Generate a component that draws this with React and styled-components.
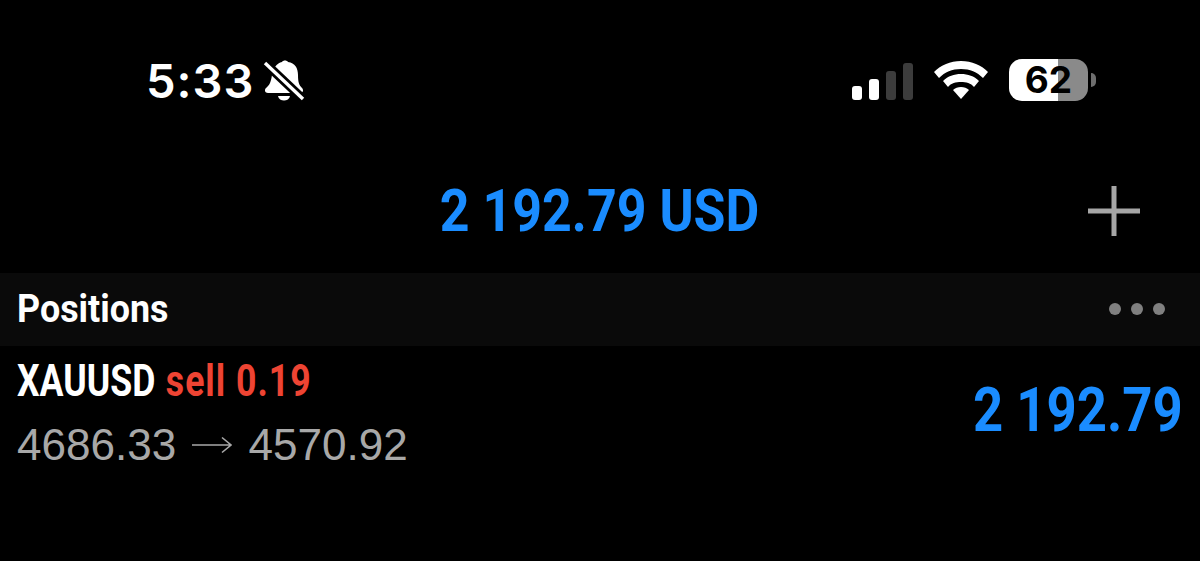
import React from 'react';
import styled, { createGlobalStyle } from 'styled-components';

const Global = createGlobalStyle`
    html, body {
        margin: 0;
        padding: 0;
        background-color: #000;
    }
`;

// no DIN style font here, so Roboto gets squeezed to the same shape
const Condensed = styled.div`
    font-family: "Roboto", "Liberation Sans", sans-serif;
    font-size: ${(props) => props.size}px;
    font-weight: 700;
    white-space: nowrap;
    transform: scaleX(${(props) => props.squeeze});
    transform-origin: ${(props) => props.origin || 'left'} center;
`;

const Page = styled.div`
    width: 1200px;
    height: 561px;
    overflow: hidden;
    background-color: #000;
    color: #fff;
`;

const StatusBar = styled.div`
    height: 150px;
    box-sizing: border-box;
    padding: 59px 104px 0 146px;
    display: flex;
    justify-content: space-between;
    align-items: flex-start;
`;

const TimeGroup = styled.div`
    display: flex;
    align-items: center;
    gap: 9px;
    height: 44px;
`;

const Time = styled.span`
    font-family: "Inter", "Liberation Sans", sans-serif;
    font-weight: 600;
    font-size: 47px;
    line-height: 44px;
    letter-spacing: 1px;
`;

const StatusIcons = styled.div`
    display: flex;
    align-items: center;
    gap: 21px;
    height: 42px;
`;

const Signal = styled.div`
    display: flex;
    align-items: flex-end;
    gap: 7px;
    height: 37px;
    margin-top: 3px;
`;

const Bar = styled.div`
    width: 10px;
    height: ${(props) => props.h}px;
    border-radius: 3px;
    background-color: ${(props) => (props.on ? '#fff' : '#3c3c3c')};
`;

const Battery = styled.div`
    display: flex;
    align-items: center;
    gap: 3px;
`;

const BatteryBody = styled.div`
    width: 79px;
    height: 42px;
    border-radius: 13px;
    background: linear-gradient(to right, #fff 0 49px, #8a8a8a 49px 100%);
    color: #000;
    font-family: "Inter", "Liberation Sans", sans-serif;
    font-weight: 700;
    font-size: 37px;
    line-height: 42px;
    text-align: center;
`;

const BatteryNub = styled.div`
    width: 5px;
    height: 14px;
    border-radius: 0 5px 5px 0;
    background-color: #6e6e6e;
`;

const Header = styled.div`
    height: 123px;
    display: grid;
    grid-template-columns: 1fr auto 1fr;
    align-items: center;
    padding-bottom: 2px;
    box-sizing: border-box;
`;

const Balance = styled(Condensed)`
    grid-column: 2;
    line-height: 60px;
    color: #1a8cff;
`;

const AddSlot = styled.div`
    display: flex;
    justify-content: flex-end;
    padding-right: 60px;
`;

const SectionBar = styled.div`
    height: 73px;
    box-sizing: border-box;
    padding: 0 35px 2px 17px;
    background-color: #0a0a0a;
    display: flex;
    align-items: center;
    justify-content: space-between;
`;

const SectionTitle = styled(Condensed)`
    line-height: 44px;
`;

const Dots = styled.div`
    display: flex;
    gap: 10px;
`;

const Dot = styled.div`
    width: 12px;
    height: 12px;
    border-radius: 50%;
    background-color: #808080;
`;

const PositionRow = styled.div`
    display: flex;
    justify-content: space-between;
    align-items: center;
    padding: 12px 17px 0;
`;

const Info = styled.div`
    display: flex;
    flex-direction: column;
    gap: 17px;
`;

const Instrument = styled(Condensed)`
    line-height: 46px;
`;

const Sell = styled.span`
    color: #ee4433;
    letter-spacing: 1.2px;
    margin-left: 2px;
`;

const Prices = styled.div`
    font-family: "Liberation Sans", sans-serif;
    font-size: 44.1px;
    line-height: 48px;
    color: #a8a8a8;
    display: flex;
    align-items: center;
    gap: 16px;
`;

const Profit = styled(Condensed)`
    line-height: 64px;
    margin-bottom: 8px;
    color: #1a8cff;
`;

function MutedBell() {
    return (
        <svg width="42" height="44" viewBox="0 0 42 44">
            <path
                d="M19 3c1 -2 5 -2 6 0c7 1 10 6 10 13c0 7 1 10 4 13c2 2 1 5 -2 5H5c-3 0 -4 -3 -2 -5c4 -3 5 -7 6 -13c1 -7 5 -12 10 -13z"
                fill="#fff"
            />
            <path d="M15 37h12c-1 6 -11 6 -12 0z" fill="#fff" />
            <path d="M2 4L40 40" stroke="#000" strokeWidth="9" />
            <path d="M2 4L40 40" stroke="#fff" strokeWidth="3.4" />
        </svg>
    );
}

function Wifi() {
    return (
        <svg width="54" height="38" viewBox="0 0 54 38">
            <path
                d="M27 0C16 0 7 4 0 11l5 6c6 -6 13 -9 22 -9s16 3 22 9l5 -6C47 4 38 0 27 0z"
                fill="#fff"
            />
            <path
                d="M27 13c-7 0 -13 2 -18 7l5 6c3 -4 8 -5 13 -5s10 1 13 5l5 -6c-5 -5 -11 -7 -18 -7z"
                fill="#fff"
            />
            <path d="M27 26c-3 0 -6 1 -8 3l8 9l8 -9c-2 -2 -5 -3 -8 -3z" fill="#fff" />
        </svg>
    );
}

function Plus() {
    return (
        <svg width="52" height="50" viewBox="0 0 52 50">
            <path d="M0 25H52M26 0V50" stroke="#a6a6a6" strokeWidth="5" />
        </svg>
    );
}

function Arrow() {
    return (
        <svg width="40" height="18" viewBox="0 0 40 18">
            <path d="M0 9H39M30 1.5L39 9L30 16.5" stroke="#a8a8a8" strokeWidth="1.6" fill="none" />
        </svg>
    );
}

export default function App() {
    return (
        <Page>
            <Global />
            <StatusBar>
                <TimeGroup>
                    <Time>5:33</Time>
                    <MutedBell />
                </TimeGroup>
                <StatusIcons>
                    <Signal>
                        <Bar h={14} on />
                        <Bar h={21} on />
                        <Bar h={29} />
                        <Bar h={37} />
                    </Signal>
                    <Wifi />
                    <Battery>
                        <BatteryBody>62</BatteryBody>
                        <BatteryNub />
                    </Battery>
                </StatusIcons>
            </StatusBar>
            <Header>
                <Balance size={59} squeeze={0.88} origin="center">2 192.79 USD</Balance>
                <AddSlot>
                    <Plus />
                </AddSlot>
            </Header>
            <SectionBar>
                <SectionTitle size={39} squeeze={0.92}>Positions</SectionTitle>
                <Dots>
                    <Dot />
                    <Dot />
                    <Dot />
                </Dots>
            </SectionBar>
            <PositionRow>
                <Info>
                    <Instrument size={44} squeeze={0.81}>
                        XAUUSD <Sell>sell 0.19</Sell>
                    </Instrument>
                    <Prices>
                        <span>4686.33</span>
                        <Arrow />
                        <span>4570.92</span>
                    </Prices>
                </Info>
                <Profit size={62} squeeze={0.85} origin="right">2 192.79</Profit>
            </PositionRow>
        </Page>
    );
}
